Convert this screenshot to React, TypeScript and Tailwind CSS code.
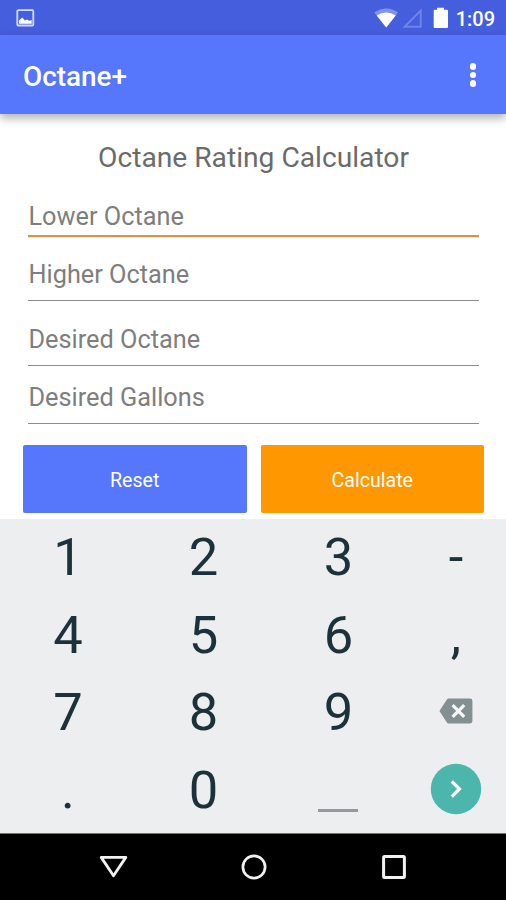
import { useState } from "react";

interface Field {
  id: string;
  label: string;
  className: string;
}

const fields: Field[] = [
  { id: "lower", label: "Lower Octane", className: "h-[46px] pb-[3px]" },
  { id: "higher", label: "Higher Octane", className: "h-16 pb-[10px]" },
  { id: "desired", label: "Desired Octane", className: "h-[65px] pb-[10px]" },
  { id: "gallons", label: "Desired Gallons", className: "h-[58px] pb-[10px]" },
];

const keys = ["1", "2", "3", "-", "4", "5", "6", ",", "7", "8", "9", "del", ".", "0", "space", "next"];

export default function App() {
  const [focused, setFocused] = useState("lower");

  return (
    <div className="flex h-[900px] w-[506px] flex-col overflow-hidden bg-white font-['Roboto',sans-serif]">
      <StatusBar />

      {/* Toolbar */}
      <header className="z-10 flex h-[79px] shrink-0 items-center justify-between bg-[#5677fc] pr-[30px] pl-[23px] shadow-[0_4px_9px_rgba(0,0,0,0.32)]">
        <h1 className="mt-[4px] text-[27.9px] leading-8 font-medium text-white">Octane+</h1>
        <button aria-label="Menu" className="mt-[1px] flex flex-col gap-[2px]">
          <span className="size-[6.5px] rounded-full bg-white" />
          <span className="size-[6.5px] rounded-full bg-white" />
          <span className="size-[6.5px] rounded-full bg-white" />
        </button>
      </header>

      <main className="flex h-[405px] shrink-0 flex-col">
        <h2 className="mt-[28px] pl-[1px] text-center text-[28.2px] leading-8 text-[#6b6b6b]">
          Octane Rating Calculator
        </h2>

        <div className="mt-[17px] ml-[28px] w-[451px]">
          {fields.map((field) => (
            <div
              key={field.id}
              onClick={() => setFocused(field.id)}
              className={`flex items-end pl-[0.5px] text-[25.3px] leading-[30px] text-[#7e7e7e] ${field.className} ${
                focused === field.id
                  ? "border-b-2 border-[#cf964a] shadow-[0_1px_0_#fbe3bc]"
                  : "border-b-[1.5px] border-[#8a8d8d]"
              }`}
            >
              {field.label}
            </div>
          ))}
        </div>

        <div className="mt-[21px] flex gap-[14px] pl-[23px] text-[19.6px] text-white">
          <button className="h-[67.5px] w-[223.5px] rounded-[2px] bg-[#5677fc] pt-[4px]">Reset</button>
          <button className="h-[67.5px] w-[223.5px] rounded-[2px] bg-[#ff9800] pt-[4px]">Calculate</button>
        </div>
      </main>

      {/* Keypad */}
      <div className="grid h-[314px] shrink-0 grid-cols-[136px_135px_135px_100px] grid-rows-[78px_77px_78px_77px] bg-[#eceef0] text-[52.5px] leading-none text-[#1c313a]">
        {keys.map((key) => (
          <Key key={key} value={key} />
        ))}
      </div>

      <NavBar />
    </div>
  );
}

function Key({ value }: { value: string }) {
  if (value === "del") {
    return (
      <button aria-label="Delete" className="flex items-center justify-center pb-[4px]">
        <svg width="34" height="26" viewBox="0 0 34 26">
          <path d="M9.6 .5H31a2.4 2.4 0 0 1 2.4 2.4v20.2a2.4 2.4 0 0 1-2.4 2.4H9.6q-1 0-1.7-1L.4 13 7.9 1.5q.7-1 1.7-1z" fill="#839092" />
          <path d="m13.6 7.2 11.6 11.6m0-11.6L13.6 18.8" stroke="#f4f7f8" strokeWidth="3.2" />
        </svg>
      </button>
    );
  }
  if (value === "next") {
    return (
      <button aria-label="Next" className="flex items-center justify-center pb-[4px]">
        <svg width="52" height="52" viewBox="0 0 52 52">
          <circle cx="26" cy="26" r="25.2" fill="#4db6ac" />
          <path d="m21.8 18.4 7.6 7.6-7.6 7.6" fill="none" stroke="#fff" strokeWidth="3.2" />
        </svg>
      </button>
    );
  }
  if (value === "space") {
    return (
      <button aria-label="Space" className="flex items-end justify-center pr-[1px] pb-[17px]">
        <span className="h-[3px] w-[40px] bg-[#929a9c]" />
      </button>
    );
  }
  return <button className="flex items-center justify-center pb-[1px]">{value}</button>;
}

function StatusBar() {
  return (
    <div className="flex h-[35px] shrink-0 items-center bg-[#455ede] pr-[11px] pl-[16px] text-white">
      <svg width="19" height="18" viewBox="0 0 19 18">
        <rect x="1.3" y="1.1" width="16" height="15.4" rx="1" fill="none" stroke="#d3dafa" strokeWidth="1.8" />
        <path d="M3 14.8v-3.2l3.2-3 2.8 3 2-1.2 2.2 1.4 2.5-.8v3.8z" fill="#fff" />
      </svg>
      <svg className="ml-auto" width="25" height="20" viewBox="0 0 25 20">
        <path d="M.3 4.6Q12.2-3.8 24.1 4.6L12.2 19.4z" fill="#8293ea" />
        <path d="M2.7 7.6q9.5-6.2 19 0l-9.5 11.8z" fill="#fff" />
      </svg>
      <svg className="mt-[2px] ml-[3px]" width="21" height="20" viewBox="0 0 21 20">
        <path d="M18.7 1.6v16.2H2.6z" fill="none" stroke="#7083e6" strokeWidth="2" />
      </svg>
      <svg className="ml-[10px]" width="16" height="22" viewBox="0 0 16 22">
        <path d="M4 .8h7v2h3q1 0 1 1V20q0 1-1 1H1.7q-1 0-1-1V3.8q0-1 1-1H4z" fill="#fff" />
      </svg>
      <span className="mt-[3px] ml-[7px] text-[20px] leading-6 font-medium">1:09</span>
    </div>
  );
}

function NavBar() {
  return (
    <nav className="flex h-[67px] shrink-0 items-center justify-center gap-[112px] border-t border-[#777] bg-black">
      <svg width="29" height="26" viewBox="0 0 29 26">
        <path d="M2.2 3.4h24.6L14.5 21.8z" fill="none" stroke="#f2f2f2" strokeWidth="2.8" strokeLinejoin="round" />
      </svg>
      <svg width="28" height="28" viewBox="0 0 28 28">
        <circle cx="14" cy="14" r="11.1" fill="none" stroke="#f2f2f2" strokeWidth="2.7" />
      </svg>
      <svg width="28" height="28" viewBox="0 0 28 28">
        <rect x="3.6" y="3.6" width="20.8" height="20.8" rx="1" fill="none" stroke="#f2f2f2" strokeWidth="3" />
      </svg>
    </nav>
  );
}
